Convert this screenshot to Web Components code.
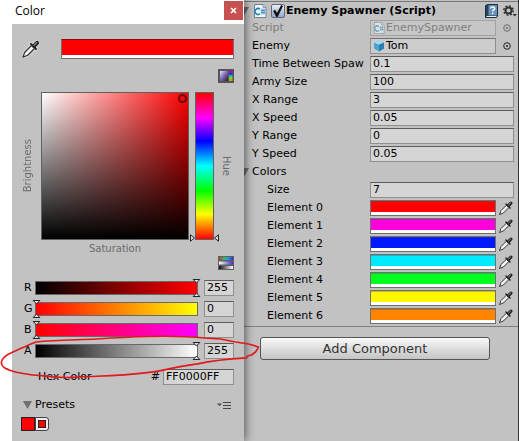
<!DOCTYPE html>
<html lang="en">
<head>
<meta charset="utf-8">
<title>Color picker and inspector</title>
<style>
  html { height: 100%; }
  body { margin: 0; min-height: 100%; display: grid; background: #c2c2c2; font: 11px/16px "DejaVu Sans", Verdana, sans-serif; color: #000; overflow: hidden; }
</style>
</head>
<body>
<editor-desktop>
  <color-window slot="window" heading="Color">
    <current-color></current-color>
    <mode-button kind="box" label="Color box mode"></mode-button>
    <hue-field></hue-field>
    <mode-button kind="sliders" label="Slider mode"></mode-button>
    <channel-stack>
      <channel-slider name="R" value="255" from="#000" to="#f00"></channel-slider>
      <channel-slider name="G" value="0" from="#f00" to="#ff0"></channel-slider>
      <channel-slider name="B" value="0" from="#f00" to="#f0f"></channel-slider>
      <channel-slider name="A" value="255" from="#000" to="#fff"></channel-slider>
    </channel-stack>
    <hex-field value="FF0000FF"></hex-field>
    <preset-list></preset-list>
  </color-window>
  <inspector-panel slot="inspector">
    <component-header>Enemy Spawner (Script)</component-header>
    <object-row label="Script" value="EnemySpawner" kind="script" disabled></object-row>
    <object-row label="Enemy" value="Tom" kind="prefab"></object-row>
    <text-row label="Time Between Spaw" value="0.1"></text-row>
    <text-row label="Army Size" value="100"></text-row>
    <text-row label="X Range" value="3"></text-row>
    <text-row label="X Speed" value="0.05"></text-row>
    <text-row label="Y Range" value="0"></text-row>
    <text-row label="Y Speed" value="0.05"></text-row>
    <fold-out>Colors</fold-out>
    <text-row class="nested" label="Size" value="7"></text-row>
    <color-row class="nested" label="Element 0" value="#ff0000"></color-row>
    <color-row class="nested" label="Element 1" value="#ff00dc"></color-row>
    <color-row class="nested" label="Element 2" value="#0019ff"></color-row>
    <color-row class="nested" label="Element 3" value="#00eaff"></color-row>
    <color-row class="nested" label="Element 4" value="#00ff21"></color-row>
    <color-row class="nested" label="Element 5" value="#fff700"></color-row>
    <color-row class="nested" label="Element 6" value="#ff8400"></color-row>
    <add-button slot="footer">Add Component</add-button>
  </inspector-panel>
</editor-desktop>
<script>
const base = `*{box-sizing:border-box}
button,input{font:inherit;color:inherit;margin:0}
button{border:0;padding:0;background:none;display:block}
svg{display:block}
input[type=text]{display:block;width:100%;min-width:0;height:16px;border:1px solid #8f8f8f;border-top-color:#5c5c5c;background:#d5d5d5;padding:0 2px;outline:0;border-radius:0}`;

const dropper = `<svg width="16" height="16" viewBox="0 0 16 16">
<path d="M8.600 5 3 10.600 1.500 14.500 5.400 13 11 7.400" fill="#f4f4f4" stroke="#333" stroke-width="1" stroke-linejoin="round"/>
<path d="M8 4 12 8" stroke="#222" stroke-width="1.500" stroke-linecap="round"/>
<path d="M10.400 5.600 12.900 3.100" stroke="#222" stroke-width="3.200" stroke-linecap="round"/><path d="M10.200 5.300 12.900 2.700" stroke="#999" stroke-width="1"/></svg>`;
const triangle = `<svg width="9" height="8" viewBox="0 0 9 8"><path d="M0 0h9L4.500 8z" fill="#707070"/></svg>`;
const script = `<svg width="14" height="14" viewBox="0 0 14 14"><path d="M1.500.5h8.500l3 3v10h-11.500z" fill="#f2f6f8" stroke="#70818b"/><path d="M10 .5v3h3" fill="#cad5db" stroke="#70818b" stroke-width=".7"/><path d="M7 5.200a3 3 0 1 0 0 4.600" fill="none" stroke="#1683b5" stroke-width="1.500"/><path d="M9 4.500v6M11 4.500v6M7.800 6.500h4.200M7.800 8.600h4.200" stroke="#1683b5" stroke-width=".8"/></svg>`;

function define(name, css, render) {
  customElements.define(name, class extends HTMLElement {
    constructor() {
      super();
      this.attachShadow({ mode: 'open' });
    }
    connectedCallback() {
      const t = document.createElement('template');
      t.innerHTML = `<style>${base}${css}</style>${render(n => this.getAttribute(n), this)}`;
      this.shadowRoot.replaceChildren(t.content.cloneNode(true));
    }
  });
}

/* Desktop: window on the left, inspector on the right, pen stroke above both */
define('editor-desktop', `
:host{display:grid;grid-template-columns:244fr 275fr;position:relative;min-width:0}
slot{display:contents}
.ink{position:absolute;left:0;top:330px;width:50%;height:50px;z-index:3;pointer-events:none;overflow:visible}`,
() => `<slot name="window"></slot><slot name="inspector"></slot>
<svg class="ink" viewBox="0 0 260 50" preserveAspectRatio="xMinYMin meet" aria-hidden="true" fill="none" stroke="#e2191c" stroke-width="1.700" stroke-linecap="round" stroke-linejoin="round"><path d="M259 17 249 14 236 12 221 9 205 8C185 6 168 6 148 6.500 128 7 112 8 97 9 76 10 56 10 36 12 28 15 20 19 13 22 6 25 2 28 1.500 32 1 36 3 38 9 40 17 43 31 45 44 46 58 48 69 48 81 47 100 46 121 46 145 43 160 42 179 36 198 34 216 30 230 29 247 28L248 26 252 25 256 22 258 19z"/></svg>`);

define('color-window', `
:host{display:flex;flex-direction:column;min-width:0;background:#fff;position:relative;z-index:1;padding-left:12px;box-shadow:1px 0 9px rgba(0,0,0,.6)}
header{display:flex;height:24px;background:#fff;padding:0 1px 0 3px;justify-content:space-between;font:12px/22px "Open Sans",sans-serif}
header button{width:19px;height:19px;margin-top:1px;background:#c75050;display:grid;place-items:center}
main{flex:1;background:#c2c2c2;display:flex;flex-direction:column;padding:15px 10px 10px 9px}`,
a => `<header><span>${a('heading')}</span><button aria-label="Close"><svg width="7" height="7" viewBox="0 0 7 7"><path d="m1 1 5 5m0-5L1 6" stroke="#fff" stroke-width="1.700"/></svg></button></header><main><slot></slot></main>`);

define('current-color', `
:host{display:grid;grid-template-columns:20px 1fr;column-gap:20px;align-items:center}
button svg{width:20px;height:20px;filter:drop-shadow(0 0 1px #fff)}
input{width:100%;height:20px;padding:0 0 3px;border:1px solid #707070;border-top-color:#7a1010;background:#fff}
::-webkit-color-swatch-wrapper{padding:0}::-webkit-color-swatch{border:0;border-radius:0}`,
() => `<button aria-label="Pick from screen">${dropper}</button><input type="color" value="#ff0000" aria-label="Current color">`);

define('mode-button', `:host{display:flex;justify-content:flex-end;padding:10px 0 9px}
:host([kind=sliders]){padding:0 0 10px}`,
a => `<button aria-label="${a('label')}"><svg width="16" height="14" viewBox="0 0 16 14">${a('kind') === 'box'
? `<defs><linearGradient id="v" x1="0" y1="0" x2="1" y2="1"><stop stop-color="#e8e8ff"/><stop offset=".5" stop-color="#7d63b8"/><stop offset="1" stop-color="#222"/></linearGradient></defs><rect x=".5" y=".5" width="15" height="13" fill="#555" stroke="#555"/><rect x="2" y="2" width="8" height="10" fill="url(#v)"/><path d="M11 2h3.500v2H11z" fill="#b300c8"/><path d="M11 4h3.500v2H11z" fill="#2a36e8"/><path d="M11 6h3.500v2H11z" fill="#14c6a4"/><path d="M11 8h3.500v2H11z" fill="#64e21e"/><path d="M11 10h3.500v2H11z" fill="#d09a18"/>`
: `<defs><linearGradient id="h"><stop stop-color="#b34020"/><stop offset=".4" stop-color="#30c070"/><stop offset=".7" stop-color="#2090e0"/><stop offset="1" stop-color="#5020c0"/></linearGradient><linearGradient id="s"><stop stop-color="#fff"/><stop offset="1" stop-color="#3430d0"/></linearGradient><linearGradient id="k"><stop stop-color="#111"/><stop offset="1" stop-color="#fff"/></linearGradient></defs><rect x=".5" y=".5" width="15" height="13" fill="#606060" stroke="#606060"/><rect x="1" y="1" width="14" height="3" fill="url(#h)"/><rect x="1" y="5.500" width="14" height="3" fill="url(#s)"/><rect x="1" y="10" width="14" height="3" fill="url(#k)"/>`}</svg></button>`);

define('hue-field', `
:host{display:grid;grid-template-columns:15px 1fr 19px 14px;grid-template-rows:auto 16px;column-gap:6px;color:#6b6b6b;margin-left:-1px;font-size:10px}
:host>span{line-height:15px;align-self:center}
.b{writing-mode:vertical-rl;transform:rotate(180deg)}
.h{writing-mode:vertical-rl}
.b,.h{line-height:14px;align-self:center}
.sv{aspect-ratio:1;position:relative;border:1px solid #606060;background:linear-gradient(to top,#000,transparent),linear-gradient(to right,#fff,#f00)}
.sv button{position:absolute;right:1px;top:1px;width:9px;height:9px;border:2px solid #6a0808;border-radius:50%}
.hue{position:relative;border:1px solid #606060;background:linear-gradient(#f00,#f0f 17%,#00f 33%,#0ff 50%,#0f0 67%,#ff0 83%,#f00)}
input{appearance:none;position:absolute;inset:0 -6px -3px;width:auto;background:none;writing-mode:vertical-lr;direction:rtl}
input::-webkit-slider-thumb{appearance:none;width:29px;height:8px;background:url("data:image/svg+xml,%3Csvg xmlns='http://www.w3.org/2000/svg' width='29' height='8'%3E%3Cg fill='%23ddd' stroke='%23222'%3E%3Cpath d='M.5.8v6.400L4.500 4zM28.500.8v6.400L24.500 4z'/%3E%3C/g%3E%3C/svg%3E")}
.s{grid-column:2;justify-self:center}`,
() => `<span class="b">Brightness</span><div class="sv"><button aria-label="Saturation and brightness"></button></div><div class="hue"><input type="range" min="0" max="360" value="0" aria-label="Hue"></div><span class="h">Hue</span><span class="s">Saturation</span>`);

define('channel-stack', `:host{display:grid;row-gap:5px}`, () => `<slot></slot>`);

define('channel-slider', `
:host{display:grid;grid-template-columns:11px 1fr 30px;align-items:center;height:16px;padding-left:3px}
.track{height:14px;border:1px solid #686868;display:flex;align-items:center;margin-right:6px}
input[type=range]{appearance:none;flex:1 0 calc(100% + 8px);min-width:0;height:20px;margin:0 -4px;background:none}
::-webkit-slider-thumb{appearance:none;width:9px;height:20px;background:url("data:image/svg+xml,%3Csvg xmlns='http://www.w3.org/2000/svg' width='9' height='20'%3E%3Cg fill='%23ddd' stroke='%23222'%3E%3Cpath d='M1.200 1.500h6.600L4.500 5zM1.200 18.500h6.600L4.500 15z'/%3E%3C/g%3E%3C/svg%3E")}`,
a => `<label for="n">${a('name')}</label><div class="track" style="background:linear-gradient(to right,${a('from')},${a('to')})"><input type="range" min="0" max="255" value="${a('value')}" aria-label="${a('name')} slider"></div><input id="n" type="text" value="${a('value')}">`);

define('hex-field', `
:host{display:grid;grid-template-columns:1fr auto 71px;padding:10px 0 0 17px;align-items:center}
span{margin-right:3px}`,
a => `<label for="x">Hex Color</label><span>#</span><input id="x" type="text" value="${a('value')}">`);

define('preset-list', `
:host{display:block;padding-top:12px}
.head{display:flex;align-items:center;gap:3px;padding:0 3px 0 2px}
.head button:last-child{margin-left:auto}
.fold{display:flex;align-items:center;gap:3px}
.row{display:flex;margin-top:4px}
.row button{width:14px;height:14px;background:red;border:1px solid #222}
.row .new{border:1px solid #444;border-radius:0 3px 3px 0;background:#eee;display:grid;place-items:center}
.new i{display:block;width:8px;height:8px;background:red;border:1px solid #222}`,
() => `<div class="head"><button class="fold">${triangle}Presets</button><button aria-label="Preset menu"><svg width="14" height="8" viewBox="0 0 14 8"><path d="M0 2.500h5L2.500 5z" fill="#444"/><path d="M6 1.500h8M6 4.500h8M6 7.500h8" stroke="#444"/></svg></button></div><div class="row"><button aria-label="Red preset"></button><button class="new" aria-label="Add preset"><i></i></button></div>`);

define('inspector-panel', `
:host{display:block;min-width:0;border-right:1px solid #333}
.list{display:grid;row-gap:2px;padding:1px 4px 2px 8px;border-bottom:1px solid #808080}
.foot{padding:10px 28px 0 16px}
::slotted(.nested){--indent:15px}`,
() => `<div class="list"><slot></slot></div><div class="foot"><slot name="footer"></slot></div>`);

define('component-header', `
:host{box-sizing:border-box;display:flex;align-items:center;height:17px;padding-top:2px;border-top:1px solid #777;margin:0 -4px 0 -8px;padding-right:1px}
.fold{margin:0 4px 0 -4px}
label{display:flex;align-items:center;font-weight:bold;margin-left:4px;white-space:nowrap}
input{appearance:none;width:14px;height:14px;margin-right:1px;border:1px solid #5d6a80;border-radius:2px;background:linear-gradient(#e8eef6,#8fa8cc);display:grid;place-items:center}
input:checked::before{content:"";width:10px;height:12px;background:#111;clip-path:polygon(0 50%,22% 40%,40% 66%,82% 0,100% 8%,46% 100%,34% 100%)}
.help{margin-left:auto;margin-right:5px}`,
() => `<button class="fold" aria-label="Collapse">${triangle}</button>${script}<label><input type="checkbox" checked><slot></slot></label>
<button class="help" aria-label="Help"><svg width="13" height="14" viewBox="0 0 13 14"><path d="M.5 1.500 3 .5h9.500v12l-1 1H.5z" fill="#27445f" stroke="#1b2d40"/><path d="M3.500 1h8.500v10.500H3.500z" fill="#6990b7"/><path d="M1.500 12.500h10" stroke="#eee"/><path d="M5.700 4.500c.2-2 4-2 4 0 0 1.400-2 1.300-2 3m0 1.200v1.600" stroke="#fff" stroke-width="1.400" fill="none"/></svg></button>
<button aria-label="Component menu"><svg width="14" height="14" viewBox="0 0 14 14"><circle cx="5.500" cy="6.500" r="3" fill="none" stroke="#333" stroke-width="2"/><circle cx="5.500" cy="6.500" r="4.600" fill="none" stroke="#333" stroke-width="1.600" stroke-dasharray="1.800 1.813"/><path d="M9.500 10h4.500l-2.250 2.500z" fill="#333"/></svg></button>`);

const rowCss = `
:host{display:grid;grid-template-columns:minmax(0,118fr) minmax(0,144fr);height:16px}
label{padding-left:var(--indent,0);white-space:nowrap}`;

define('text-row', rowCss, a => `<label for="f">${a('label')}</label><input id="f" type="text" value="${a('value')}">`);

define('object-row', rowCss + `
:host([disabled]){color:#808080}
.cell{display:grid;grid-template-columns:1fr 18px}
.pick{display:grid;place-items:center;padding-left:4px}
.field{display:flex;align-items:center;border:1px solid #8f8f8f;border-top-color:#707070;background:#cdcdcd;padding-left:2px;gap:1px}
:host([disabled]) .field{border-color:#a2a2a2;background:#c6c6c6}
:host([disabled]) svg{opacity:.55}
.field svg{width:12px;height:12px;flex:none}
.field input{border:0;background:none;height:14px;padding:0}`,
a => `<label for="f">${a('label')}</label><div class="cell"><div class="field">${a('kind') === 'script' ? script : `<svg viewBox="0 0 12 12"><path d="m6 .5 5 2v6L6 11.500 1 8.500v-6z" fill="#4aa5d5"/><path d="m1 2.500 5 2.300 5-2.300-5-2z" fill="#a7dcf3"/><path d="M6 4.800v6.700l5-3v-6z" fill="#2e7fb0"/></svg>`}<input id="f" type="text" readonly value="${a('value')}"></div><button class="pick" aria-label="Select object"><svg width="8" height="8" viewBox="0 0 8 8"><circle cx="4" cy="4" r="3.300" fill="none" stroke="#222"/><circle cx="4" cy="4" r="1" fill="#222"/></svg></button></div>`);

define('color-row', rowCss + `
.cell{display:grid;grid-template-columns:1fr 16px;column-gap:2px}
input{width:100%;height:16px;padding:0 0 3px;border:1px solid #707070;background:#fff}
::-webkit-color-swatch-wrapper{padding:0}::-webkit-color-swatch{border:0;border-radius:0;box-shadow:inset 0 1px rgba(80,80,80,.35)}`,
a => `<label for="f">${a('label')}</label><div class="cell"><input id="f" type="color" value="${a('value')}"><button aria-label="Pick from screen">${dropper}</button></div>`);

define('fold-out', `:host{display:block;height:16px}button{display:flex;align-items:center;gap:3px;margin-left:-12px}`,
() => `<button>${triangle}<slot></slot></button>`);

define('add-button', `button{width:100%;height:23px;border:1px solid #555;border-radius:3px;background:linear-gradient(#fafafa,#dedede 50%,#c4c4c4);font-size:13px;color:#333}:host{display:block}`,
() => `<button><slot></slot></button>`);
</script>
</body>
</html>
